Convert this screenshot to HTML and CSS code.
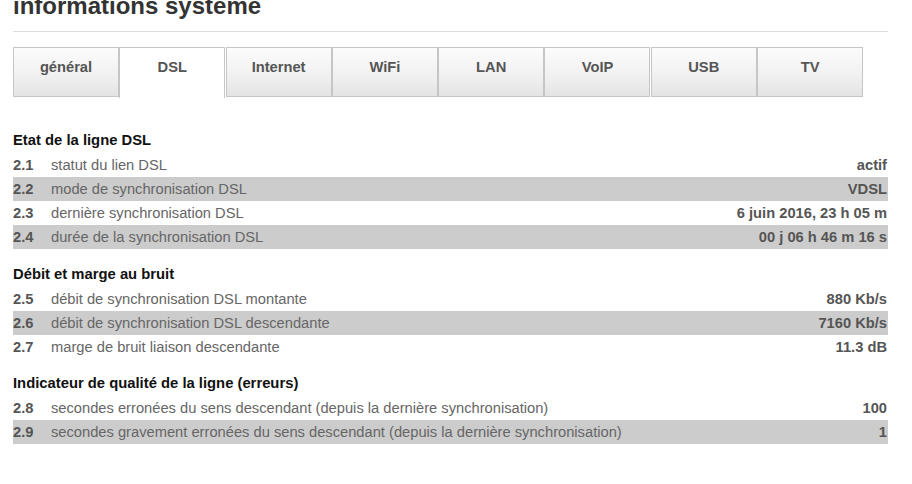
FILE: index.html
```html
<!DOCTYPE html>
<html lang="fr">
<head>
<meta charset="utf-8">
<title>informations système</title>
<link rel="stylesheet" href="styles.css">
</head>
<body>
<div class="page">
  <h1 class="title">informations système</h1>
  <ul class="tabs">
    <li class="tab">général</li>
    <li class="tab active">DSL</li>
    <li class="tab">Internet</li>
    <li class="tab">WiFi</li>
    <li class="tab">LAN</li>
    <li class="tab">VoIP</li>
    <li class="tab">USB</li>
    <li class="tab">TV</li>
  </ul>

  <section class="section first">
    <h2 class="section-title">Etat de la ligne DSL</h2>
    <div class="row"><span class="num">2.1</span><span class="label">statut du lien DSL</span><span class="value">actif</span></div>
    <div class="row alt"><span class="num">2.2</span><span class="label">mode de synchronisation DSL</span><span class="value">VDSL</span></div>
    <div class="row"><span class="num">2.3</span><span class="label">dernière synchronisation DSL</span><span class="value">6 juin 2016, 23 h 05 m</span></div>
    <div class="row alt"><span class="num">2.4</span><span class="label">durée de la synchronisation DSL</span><span class="value">00 j 06 h 46 m 16 s</span></div>
  </section>

  <section class="section">
    <h2 class="section-title">Débit et marge au bruit</h2>
    <div class="row"><span class="num">2.5</span><span class="label">débit de synchronisation DSL montante</span><span class="value">880 Kb/s</span></div>
    <div class="row alt"><span class="num">2.6</span><span class="label">débit de synchronisation DSL descendante</span><span class="value">7160 Kb/s</span></div>
    <div class="row"><span class="num">2.7</span><span class="label">marge de bruit liaison descendante</span><span class="value">11.3 dB</span></div>
  </section>

  <section class="section">
    <h2 class="section-title">Indicateur de qualité de la ligne (erreurs)</h2>
    <div class="row"><span class="num">2.8</span><span class="label">secondes erronées du sens descendant (depuis la dernière synchronisation)</span><span class="value">100</span></div>
    <div class="row alt"><span class="num">2.9</span><span class="label">secondes gravement erronées du sens descendant (depuis la dernière synchronisation)</span><span class="value">1</span></div>
  </section>
</div>
</body>
</html>
```

FILE: styles.css
```css
html, body {
  margin: 0;
  padding: 0;
  background: #ffffff;
}

body {
  font-family: "Liberation Sans", Arial, sans-serif;
  overflow: hidden;
}

.page {
  width: 875px;
  margin-left: 13px;
}

.title {
  margin: -6px 0 0 0;
  padding: 0 0 13px 0;
  font-size: 24px;
  line-height: 24px;
  font-weight: bold;
  color: #333333;
  border-bottom: 1px solid #dddddd;
}

.tabs {
  list-style: none;
  margin: 15px 0 0 0;
  padding: 0;
  display: flex;
}

.tab {
  box-sizing: border-box;
  width: 106px;
  height: 50px;
  margin-right: 0.3px;
  padding-top: 10px;
  text-align: center;
  font-size: 14.7px;
  line-height: 18px;
  font-weight: bold;
  color: #555555;
  border: 1px solid #c6c6c6;
  background: linear-gradient(to bottom, #fcfcfc 0%, #f1f1f1 55%, #e4e4e4 100%);
}

.tab.active {
  height: 51px;
  background: #ffffff;
  border-bottom: none;
}

.section {
  margin-top: 13.5px;
}

.section.first {
  margin-top: 31px;
}

.section-title {
  margin: 0;
  height: 24px;
  font-size: 14.8px;
  line-height: 22px;
  font-weight: bold;
  color: #111111;
}

.row {
  display: flex;
  height: 24px;
  line-height: 24px;
  font-size: 14.7px;
}

.row.alt {
  background: #cccccc;
}

.num {
  width: 38px;
  flex: none;
  font-weight: bold;
  color: #555555;
}

.label {
  flex: 1;
  color: #666666;
  white-space: nowrap;
}

.value {
  flex: none;
  font-weight: bold;
  color: #555555;
  padding-right: 1px;
}
```
